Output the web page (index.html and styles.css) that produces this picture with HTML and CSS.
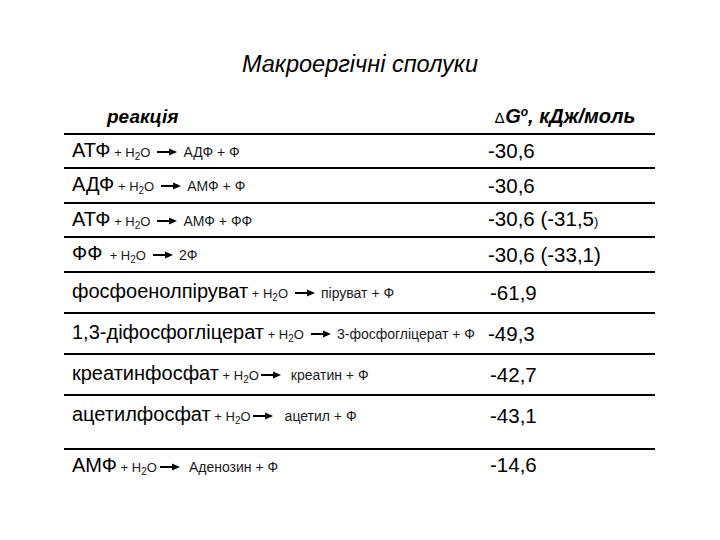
FILE: index.html
```html
<!DOCTYPE html>
<html lang="uk">
<head>
<meta charset="utf-8">
<title>Макроергічні сполуки</title>
<link rel="stylesheet" href="styles.css">
</head>
<body>
<div class="page">
  <h1 class="title">Макроергічні сполуки</h1>
  <div class="table">
    <div class="head">
      <div class="hcell-left">реакція</div>
      <div class="hcell-right"><span class="delta">∆</span>G<sup>o</sup>, кДж/моль</div>
    </div>

    <div class="row r34">
      <div class="react"><span class="big">АТФ</span><span class="sm"> + H<sub>2</sub>O</span><svg class="arrow" viewBox="0 0 20 8" width="20" height="8"><rect x="0" y="3" width="14" height="2"/><polygon points="12,0.5 20,4 12,7.5"/></svg><span class="prod">АДФ + Ф</span></div>
      <div class="val">-30,6</div>
    </div>
    <div class="row r35">
      <div class="react"><span class="big">АДФ</span><span class="sm"> + H<sub>2</sub>O</span><svg class="arrow" viewBox="0 0 20 8" width="20" height="8"><rect x="0" y="3" width="14" height="2"/><polygon points="12,0.5 20,4 12,7.5"/></svg><span class="prod">АМФ + Ф</span></div>
      <div class="val">-30,6</div>
    </div>
    <div class="row r34">
      <div class="react"><span class="big">АТФ</span><span class="sm"> + H<sub>2</sub>O</span><svg class="arrow" viewBox="0 0 20 8" width="20" height="8"><rect x="0" y="3" width="14" height="2"/><polygon points="12,0.5 20,4 12,7.5"/></svg><span class="prod">АМФ + ФФ</span></div>
      <div class="val">-30,6 (-31,5<span class="smp">)</span></div>
    </div>
    <div class="row r35">
      <div class="react"><span class="big">ФФ</span><span class="sm"> &nbsp;+ H<sub>2</sub>O</span><svg class="arrow" viewBox="0 0 20 8" width="20" height="8"><rect x="0" y="3" width="14" height="2"/><polygon points="12,0.5 20,4 12,7.5"/></svg><span class="prod">2Ф</span></div>
      <div class="val">-30,6 (-33,1)</div>
    </div>
    <div class="row r41">
      <div class="react"><span class="big">фосфоенолпіруват</span><span class="sm"> + H<sub>2</sub>O</span><svg class="arrow" viewBox="0 0 20 8" width="20" height="8"><rect x="0" y="3" width="14" height="2"/><polygon points="12,0.5 20,4 12,7.5"/></svg><span class="prod">піруват + Ф</span></div>
      <div class="val val2">-61,9</div>
    </div>
    <div class="row r41">
      <div class="react"><span class="big">1,3-діфосфогліцерат</span><span class="sm"> + H<sub>2</sub>O</span><svg class="arrow" viewBox="0 0 20 8" width="20" height="8"><rect x="0" y="3" width="14" height="2"/><polygon points="12,0.5 20,4 12,7.5"/></svg><span class="prod">3-фосфогліцерат + Ф</span></div>
      <div class="val">-49,3</div>
    </div>
    <div class="row r41">
      <div class="react"><span class="big">креатинфосфат</span><span class="sm"> + H<sub>2</sub>O</span><svg class="arrow tight" viewBox="0 0 20 8" width="20" height="8"><rect x="0" y="3" width="14" height="2"/><polygon points="12,0.5 20,4 12,7.5"/></svg><span class="prod">креатин + Ф</span></div>
      <div class="val val2">-42,7</div>
    </div>
    <div class="row r54">
      <div class="react"><span class="big">ацетилфосфат</span><span class="sm"> + H<sub>2</sub>O</span><svg class="arrow tight wide" viewBox="0 0 20 8" width="20" height="8"><rect x="0" y="3" width="14" height="2"/><polygon points="12,0.5 20,4 12,7.5"/></svg><span class="prod">ацетил + Ф</span></div>
      <div class="val val2">-43,1</div>
    </div>
    <div class="row rlast">
      <div class="react"><span class="big">АМФ</span><span class="sm"> + H<sub>2</sub>O</span><svg class="arrow tight mid" viewBox="0 0 20 8" width="20" height="8"><rect x="0" y="3" width="14" height="2"/><polygon points="12,0.5 20,4 12,7.5"/></svg><span class="prod">Аденозин + Ф</span></div>
      <div class="val val2">-14,6</div>
    </div>
  </div>
</div>
</body>
</html>
```

FILE: styles.css
```css
html, body {
  margin: 0;
  padding: 0;
  background: #fff;
}
body {
  font-family: "Liberation Sans", Arial, sans-serif;
  color: #000;
  width: 720px;
  height: 540px;
  overflow: hidden;
}
.page {
  padding-top: 50px;
}
.title {
  margin: 0;
  font-size: 23.5px;
  font-weight: normal;
  font-style: italic;
  line-height: 28px;
  text-align: center;
}
.table {
  margin-left: 64px;
  width: 591px;
  margin-top: 22px;
}
.head {
  display: flex;
  align-items: center;
  height: 33px;
  font-weight: bold;
  font-style: italic;
  font-size: 19px;
}
.hcell-left {
  width: 386px;
  padding-left: 43px;
}
.hcell-right {
  padding-left: 2px;
  font-size: 20px;
}
.delta {
  font-style: normal;
  font-weight: normal;
  font-size: 15px;
  margin-right: 1px;
}
.hcell-right sup {
  font-size: 12px;
  vertical-align: 7px;
  line-height: 0;
}
.row {
  display: flex;
  align-items: center;
  box-sizing: border-box;
  border-top: 2px solid #000;
}
.r34 { height: 34px; }
.r35 { height: 35px; }
.r41 { height: 41px; }
.r54 { height: 54px; padding-bottom: 13px; }
.rlast { height: 34px; align-items: flex-start; padding-top: 3px; }
.react {
  width: 416px;
  padding-left: 8px;
  white-space: nowrap;
  line-height: 24px;
}
.big {
  font-size: 20px;
}
.sm {
  font-size: 13px;
  color: #1a1a1a;
}
.prod {
  font-size: 14px;
  color: #1a1a1a;
}
.sm sub {
  font-size: 10px;
  vertical-align: -3px;
  line-height: 0;
}
.arrow {
  display: inline-block;
  vertical-align: 1px;
  margin: 0 6px 0 7px;
  fill: #000;
}
.arrow.tight { margin: 0 10px 0 2px; }
.arrow.tight.wide { margin: 0 12px 0 2px; }
.arrow.tight.mid { margin: 0 9px 0 3px; }
.val {
  font-size: 20.5px;
  line-height: 24px;
  white-space: nowrap;
}
.val2 {
  padding-left: 2px;
}
.smp {
  font-size: 13px;
}
```
